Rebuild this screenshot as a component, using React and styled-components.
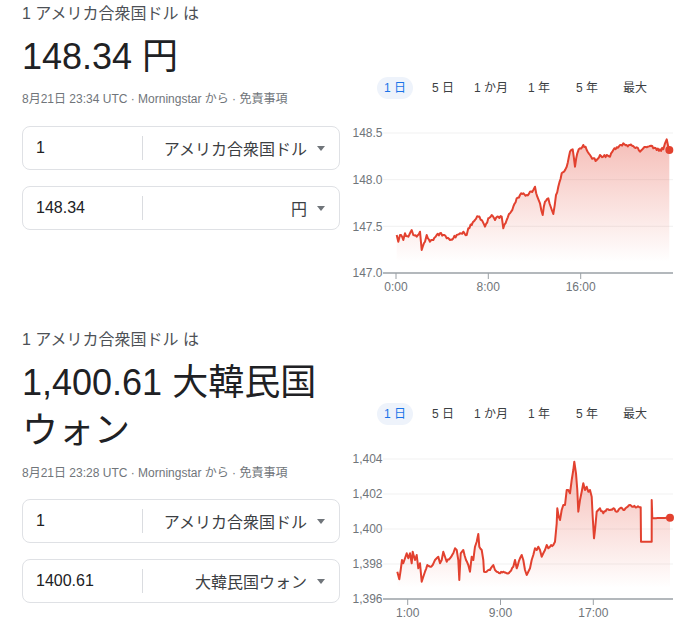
import React from "react";
import styled, { createGlobalStyle } from "styled-components";

const Global = createGlobalStyle`
  body {
    margin: 0;
    background: #fff;
    font-family: "Liberation Sans", "Noto Sans CJK JP", Arial, sans-serif;
  }
`;

const Page = styled.main`
  display: flex;
  flex-direction: column;
  gap: 26px;
`;

const Section = styled.section`
  display: flex;
  align-items: flex-start;
  padding: 3px 0 0 22px;
`;

const LeftCol = styled.div`
  width: 318px;
  flex: none;
  display: flex;
  flex-direction: column;
`;

const Subtitle = styled.div`
  font-size: 16px;
  line-height: 22px;
  color: #4d5156;
`;

const BigValue = styled.div`
  margin-top: 8px;
  font-size: 36px;
  line-height: 48px;
  color: #202124;
`;

const Meta = styled.div`
  margin-top: 10px;
  font-size: 12px;
  line-height: 16px;
  color: #70757a;
`;

const Inputs = styled.div`
  margin-top: ${(p) => p.$top}px;
  display: flex;
  flex-direction: column;
  gap: 16px;
`;

const Field = styled.div`
  box-sizing: border-box;
  height: 44px;
  border: 1px solid #dfe1e5;
  border-radius: 8px;
  display: flex;
  align-items: center;
`;

const Amount = styled.div`
  width: 106px;
  padding-left: 13px;
  font-size: 16px;
  color: #202124;
  flex: none;
`;

const Divider = styled.div`
  width: 1px;
  height: 24px;
  background: #dadce0;
  flex: none;
`;

const Select = styled.div`
  flex: 1;
  display: flex;
  justify-content: flex-end;
  align-items: center;
  gap: 10px;
  padding-right: 14px;
  font-size: 16px;
  color: #3c4043;
`;

const Caret = styled.span`
  width: 0;
  height: 0;
  border-left: 4px solid transparent;
  border-right: 4px solid transparent;
  border-top: 5px solid #70757a;
`;

const RightCol = styled.div`
  width: 338px;
  margin-left: 5px;
  flex: none;
  padding-top: 74px;
`;

const Tabs = styled.div`
  display: flex;
  padding-left: 26px;
`;

const Tab = styled.div`
  width: 48px;
  display: flex;
  justify-content: center;
`;

const Pill = styled.span`
  height: 22px;
  line-height: 22px;
  padding: 0 7px;
  border-radius: 11px;
  font-size: 12px;
  white-space: nowrap;
  color: ${(p) => (p.$active ? "#1a73e8" : "#3c4043")};
  background: ${(p) => (p.$active ? "#eef3fb" : "transparent")};
`;

const ChartSvg = styled.svg`
  display: block;
  margin-top: 21px;
  overflow: visible;
`;

function mulberry32(a) {
  return function () {
    a |= 0;
    a = (a + 0x6d2b79f5) | 0;
    let t = Math.imul(a ^ (a >>> 15), 1 | a);
    t = (t + Math.imul(t ^ (t >>> 7), 61 | t)) ^ t;
    return ((t ^ (t >>> 14)) >>> 0) / 4294967296;
  };
}

function makeLine(keys, yOff, amp, seed) {
  const r = mulberry32(seed);
  const pts = [];
  for (let i = 0; i < keys.length; i++) {
    const [X, Y, clean] = keys[i];
    const x = X / 3 - 5;
    const y = Y / 3 - yOff;
    if (i === 0) {
      pts.push([x, y]);
      continue;
    }
    const [pX, pY] = keys[i - 1];
    const px = pX / 3 - 5;
    const py = pY / 3 - yOff;
    const dx = x - px;
    const n = Math.max(1, Math.round(Math.abs(dx) / 1.3));
    for (let k = 1; k <= n; k++) {
      const t = k / n;
      let yy = py + (y - py) * t;
      const xx = px + dx * t;
      if (!clean && k < n) yy += (r() - 0.5) * 2 * amp;
      pts.push([xx, yy]);
    }
  }
  return pts;
}

const usdJpyKeys = [
  [170, 525], [175, 545], [180, 525], [190, 540], [195, 520], [205, 530], [215, 510], [220, 525],
  [230, 530], [240, 515], [245, 570], [255, 545], [260, 525], [270, 545], [280, 540], [290, 525],
  [300, 520], [310, 525], [320, 535], [330, 540], [340, 535], [350, 525], [360, 520], [370, 515],
  [380, 525], [385, 505], [395, 495], [405, 480], [415, 470], [425, 480], [435, 500], [445, 475],
  [455, 465], [465, 480], [475, 470], [485, 470], [490, 505], [500, 480], [510, 460], [520, 440],
  [530, 415], [540, 405], [550, 400], [560, 405], [570, 395], [580, 390], [585, 380], [592, 410],
  [600, 430], [608, 465], [615, 425], [625, 415], [632, 440], [640, 462], [648, 405], [655, 380],
  [665, 340], [672, 335], [680, 320], [690, 275], [698, 268], [705, 320], [712, 280], [720, 265],
  [730, 255], [740, 270], [750, 285], [760, 295], [770, 300], [780, 285], [790, 290], [800, 285],
  [810, 290], [820, 270], [830, 262], [840, 255], [850, 250], [860, 255], [870, 255], [880, 258],
  [890, 262], [900, 275], [910, 265], [920, 262], [930, 258], [940, 265], [950, 270], [960, 268],
  [970, 268], [975, 250], [980, 238], [985, 260], [988, 270],
];

const usdKrwKeys = [
  [172, 545], [178, 568], [182, 540], [186, 510], [190, 520], [195, 505], [200, 490], [205, 505],
  [210, 490], [215, 520], [218, 485], [225, 510], [230, 495], [235, 535], [240, 520], [245, 575],
  [250, 560], [255, 545], [262, 525], [270, 530], [278, 525], [285, 510], [290, 505], [295, 500],
  [300, 520], [305, 510], [310, 485], [315, 500], [320, 515], [330, 505], [340, 490], [345, 475],
  [350, 480], [355, 510], [358, 570, 1], [362, 490, 1], [370, 480], [378, 510], [385, 525], [390, 545],
  [395, 500], [400, 510], [405, 470], [410, 455], [415, 432], [418, 470], [425, 480], [430, 510],
  [432, 545], [440, 545], [450, 540], [460, 525], [465, 540], [470, 545], [480, 550], [490, 545],
  [500, 550], [510, 545], [520, 530], [525, 510], [530, 535], [540, 505], [545, 495], [550, 510],
  [555, 540], [560, 555], [565, 545], [570, 535], [575, 510], [580, 495], [585, 475], [590, 480],
  [595, 470], [600, 480], [605, 500], [610, 490], [615, 480], [620, 465], [625, 475], [630, 470],
  [640, 465], [645, 455], [650, 400, 1], [652, 355, 1], [656, 380], [660, 390], [665, 360], [670, 345],
  [675, 345], [680, 300], [685, 300], [690, 310], [695, 270], [700, 240], [703, 215, 1], [708, 250, 1],
  [712, 300, 1], [715, 365, 1], [720, 330], [725, 305], [730, 280], [735, 300], [740, 290], [745, 305],
  [750, 300], [755, 320], [758, 380, 1], [762, 445, 1], [765, 420, 1], [770, 365, 1], [775, 360],
  [780, 355], [790, 370], [800, 358], [810, 360], [820, 355], [830, 365], [840, 355], [850, 360],
  [860, 352], [870, 345], [880, 350], [890, 352], [902, 352], [903, 455, 1], [935, 455, 1],
  [935, 330, 1], [937, 385, 1], [990, 383, 1],
];

const RED = "#e2412f";
const AXIS_Y = 153;

function Chart({ id, grid, xTicks, pts }) {
  const d = "M" + pts.map(([x, y]) => `${x.toFixed(1)} ${y.toFixed(1)}`).join(" L");
  const first = pts[0];
  const last = pts[pts.length - 1];
  const fill = `${d} L${last[0].toFixed(1)} ${AXIS_Y} L${first[0].toFixed(1)} ${AXIS_Y} Z`;
  return (
    <ChartSvg width="338" height="180" viewBox="0 0 338 180">
      <defs>
        <linearGradient id={id} x1="0" y1="13" x2="0" y2="142" gradientUnits="userSpaceOnUse">
          <stop offset="0" stopColor={RED} stopOpacity="0.36" />
          <stop offset="1" stopColor={RED} stopOpacity="0" />
        </linearGradient>
      </defs>
      {grid.map((g) => (
        <g key={g.label}>
          {g.y < AXIS_Y - 1 && (
            <line x1="38" x2="328" y1={g.y} y2={g.y} stroke="#f1f1f1" strokeWidth="1" />
          )}
          <text
            x="37.5"
            y={g.y + 4.3}
            textAnchor="end"
            fontSize="12"
            fill="#70757a"
            fontFamily="Liberation Sans, Arial, sans-serif"
          >
            {g.label}
          </text>
        </g>
      ))}
      <path d={fill} fill={`url(#${id})`} />
      <path d={d} fill="none" stroke={RED} strokeWidth="2" strokeLinejoin="round" />
      <circle cx={last[0]} cy={last[1]} r="4" fill={RED} />
      <line x1="38" x2="328" y1={AXIS_Y} y2={AXIS_Y} stroke="#9aa0a6" strokeWidth="1.3" />
      {xTicks.map((t) => (
        <g key={t.label}>
          <line x1={t.x} x2={t.x} y1={AXIS_Y} y2={AXIS_Y + 6} stroke="#9aa0a6" strokeWidth="1" />
          <text
            x={t.x}
            y="171"
            textAnchor="middle"
            fontSize="12"
            fill="#70757a"
            fontFamily="Liberation Sans, Arial, sans-serif"
          >
            {t.label}
          </text>
        </g>
      ))}
    </ChartSvg>
  );
}

const TABS = ["1 日", "5 日", "1 か月", "1 年", "5 年", "最大"];

function Converter({ title, big, meta, from, to, inputsTop, chart }) {
  return (
    <Section>
      <LeftCol>
        <Subtitle>{title}</Subtitle>
        <BigValue>{big}</BigValue>
        <Meta>{meta}</Meta>
        <Inputs $top={inputsTop}>
          {[from, to].map((f) => (
            <Field key={f.cur}>
              <Amount>{f.amount}</Amount>
              <Divider />
              <Select>
                <span>{f.cur}</span>
                <Caret />
              </Select>
            </Field>
          ))}
        </Inputs>
      </LeftCol>
      <RightCol>
        <Tabs>
          {TABS.map((t, i) => (
            <Tab key={t}>
              <Pill $active={i === 0}>{t}</Pill>
            </Tab>
          ))}
        </Tabs>
        <Chart {...chart} />
      </RightCol>
    </Section>
  );
}

export default function App() {
  const jpyPts = makeLine(usdJpyKeys, 60, 1.6, 7);
  const krwPts = makeLine(usdKrwKeys, 56, 1.2, 11);
  return (
    <>
      <Global />
      <Page>
        <Converter
          title="1 アメリカ合衆国ドル は"
          big="148.34 円"
          meta="8月21日 23:34 UTC · Morningstar から · 免責事項"
          inputsTop={19}
          from={{ amount: "1", cur: "アメリカ合衆国ドル" }}
          to={{ amount: "148.34", cur: "円" }}
          chart={{
            id: "gJpy",
            pts: jpyPts,
            grid: [
              { label: "148.5", y: 13 },
              { label: "148.0", y: 59.7 },
              { label: "147.5", y: 106.3 },
              { label: "147.0", y: 153 },
            ],
            xTicks: [
              { label: "0:00", x: 51 },
              { label: "8:00", x: 143.3 },
              { label: "16:00", x: 235.7 },
            ],
          }}
        />
        <Converter
          title="1 アメリカ合衆国ドル は"
          big="1,400.61 大韓民国ウォン"
          meta="8月21日 23:28 UTC · Morningstar から · 免責事項"
          inputsTop={18}
          from={{ amount: "1", cur: "アメリカ合衆国ドル" }}
          to={{ amount: "1400.61", cur: "大韓民国ウォン" }}
          chart={{
            id: "gKrw",
            pts: krwPts,
            grid: [
              { label: "1,404", y: 13 },
              { label: "1,402", y: 48 },
              { label: "1,400", y: 83 },
              { label: "1,398", y: 118 },
              { label: "1,396", y: 153 },
            ],
            xTicks: [
              { label: "1:00", x: 62.7 },
              { label: "9:00", x: 155.5 },
              { label: "17:00", x: 248.3 },
            ],
          }}
        />
      </Page>
    </>
  );
}
